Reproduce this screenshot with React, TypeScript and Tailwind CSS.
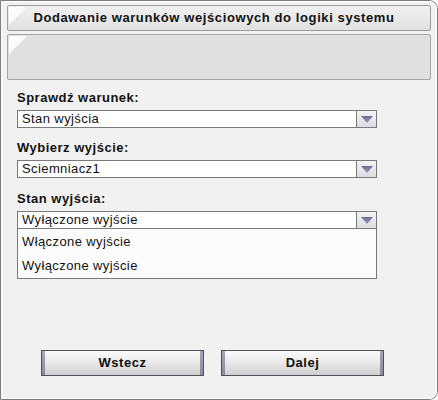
import React from "react";

const font = { fontFamily: '"Liberation Sans", Arial, sans-serif' };

function Corner() {
  return (
    <svg className="absolute left-[1px] top-[1px]" width="18" height="18" viewBox="0 0 18 18">
      <defs>
        <linearGradient id="cg" x1="0" y1="0" x2="1" y2="1">
          <stop offset="0%" stopColor="#ffffff" />
          <stop offset="100%" stopColor="#f4f4f4" />
        </linearGradient>
      </defs>
      <polygon points="0,0 18,0 0,18" fill="url(#cg)" />
    </svg>
  );
}

function Arrow() {
  return (
    <div className="w-[20px] h-full border-l border-[#7a7a7a] bg-gradient-to-b from-[#f4f4f6] to-[#dcdce2] flex items-center justify-center">
      <svg width="12" height="7" viewBox="0 0 12 7">
        <defs>
          <linearGradient id="ag" x1="0" y1="0" x2="0" y2="1">
            <stop offset="0%" stopColor="#6c6c92" />
            <stop offset="100%" stopColor="#9a9ab4" />
          </linearGradient>
        </defs>
        <polygon points="0,0 12,0 6,7" fill="url(#ag)" />
      </svg>
    </div>
  );
}

function Select({ value }: { value: string }) {
  return (
    <div className="h-[18px] w-[360px] border border-[#7a7a7a] bg-white flex items-stretch">
      <div className="flex-1 pl-[4px] text-[13px] leading-[16px] tracking-[0.4px] text-[#111]">{value}</div>
      <Arrow />
    </div>
  );
}

function Label({ children }: { children: React.ReactNode }) {
  return <div className="text-[13px] leading-[16px] font-bold tracking-[0.5px] text-[#111]">{children}</div>;
}

function Button({ children }: { children: React.ReactNode }) {
  return (
    <div className="h-[26px] w-[163px] border border-[#505058] bg-gradient-to-b from-[#fbfbfb] via-[#e8e8e8] to-[#cfcfcf] flex items-stretch">
      <div className="w-[3px] bg-gradient-to-b from-[#a6a6b4] to-[#8a8a98]" />
      <div className="flex-1 flex items-center justify-center text-[13px] font-bold tracking-[0.5px] text-[#111]">{children}</div>
      <div className="w-[3px] bg-gradient-to-b from-[#a6a6b4] to-[#8a8a98]" />
    </div>
  );
}

export default function App() {
  return (
    <div style={font} className="w-[438px] h-[400px] bg-white">
      <div className="w-[438px] h-[400px] border border-[#7c7c7c] rounded-tr-[9px] rounded-br-[9px] bg-[#f1f1f1] flex flex-col">
        <div className="border border-white rounded-tr-[8px] rounded-br-[8px] h-full flex flex-col px-[5px]">
          {/* Title bar */}
          <div className="relative mt-[3px] h-[26px] border border-[#9c9c9c] rounded-[2px] bg-gradient-to-b from-[#f0f0f0] to-[#e2e2e2] flex items-center justify-center">
            <Corner />
            <span className="text-[13px] font-bold tracking-[0.6px] text-[#111] pr-[10px]">
              Dodawanie warunków wejściowych do logiki systemu
            </span>
          </div>
          {/* Info panel */}
          <div className="relative mt-[3px] h-[46px] border border-[#a4a4a4] rounded-[2px] bg-[#e0e0e0]">
            <Corner />
          </div>

          <div className="flex flex-col pl-[10px] mt-[10px]">
            <Label>Sprawdź warunek:</Label>
            <div className="mt-[4px]">
              <Select value="Stan wyjścia" />
            </div>
            <div className="mt-[12px]">
              <Label>Wybierz wyjście:</Label>
            </div>
            <div className="mt-[4px]">
              <Select value="Sciemniacz1" />
            </div>
            <div className="mt-[13px]">
              <Label>Stan wyjścia:</Label>
            </div>
            <div className="mt-[4px]">
              <Select value="Wyłączone wyjście" />
              <div className="w-[360px] h-[50px] border border-t-0 border-[#7a7a7a] bg-[#fcfcfc] flex flex-col text-[13px] tracking-[0.4px] text-[#111]">
                <div className="h-[25px] flex items-center pl-[4px]">Włączone wyjście</div>
                <div className="h-[24px] flex items-center pl-[4px]">Wyłączone wyjście</div>
              </div>
            </div>
          </div>

          <div className="mt-auto mb-[22px] flex gap-[17px] pl-[34px]">
            <Button>Wstecz</Button>
            <Button>Dalej</Button>
          </div>
        </div>
      </div>
    </div>
  );
}
